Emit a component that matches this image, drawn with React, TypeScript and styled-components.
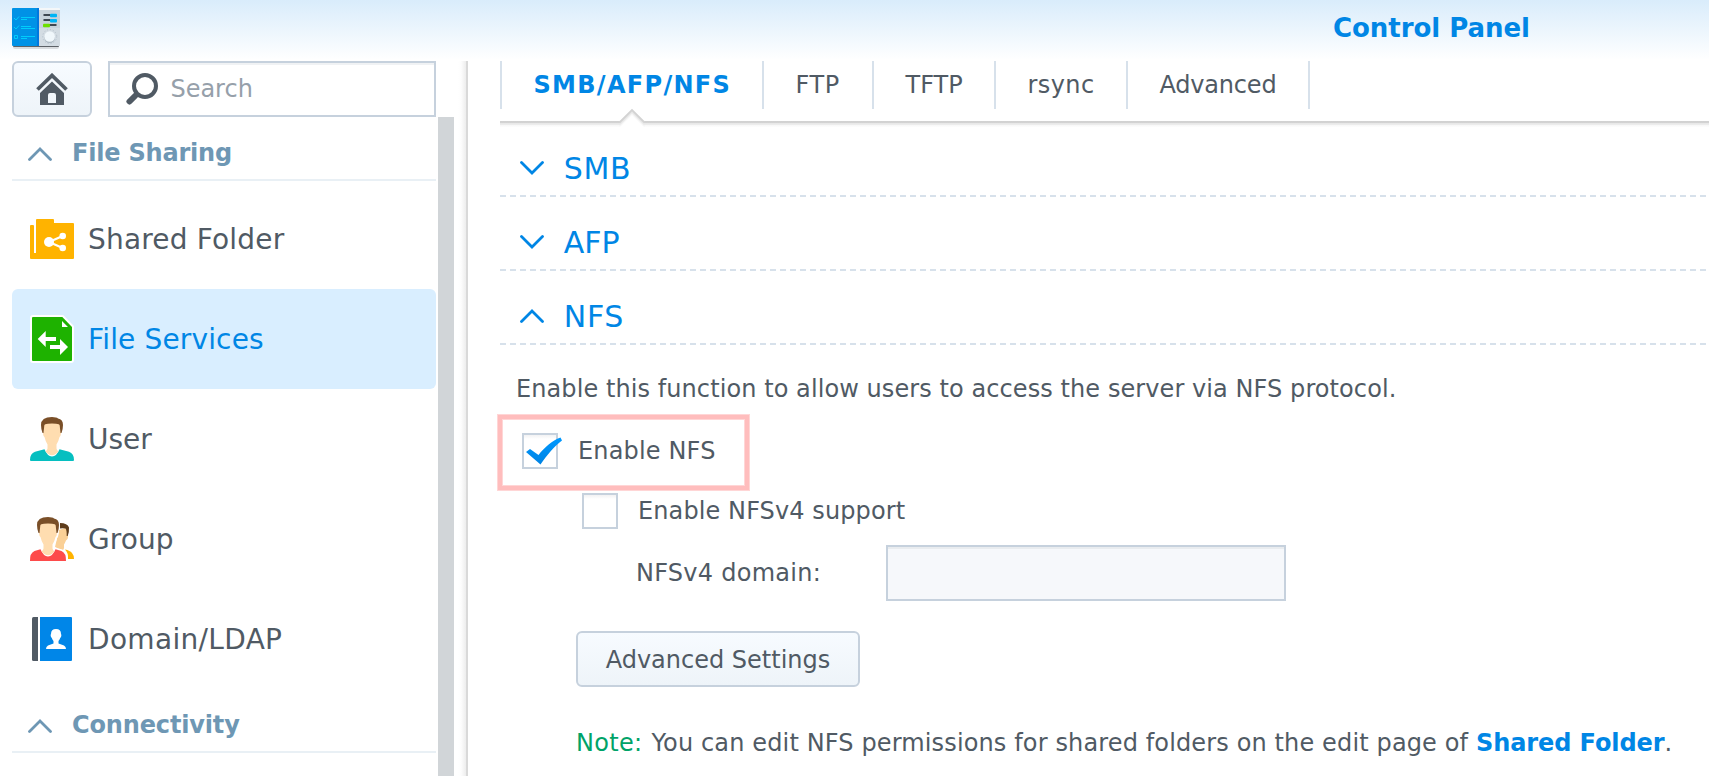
import React from "react";
import styled, { createGlobalStyle } from "styled-components";

const GlobalStyle = createGlobalStyle`
  * { box-sizing: border-box; }
  body {
    margin: 0;
    background: #fff;
    color: #505a64;
    font-family: "DejaVu Sans", Verdana, sans-serif;
    font-size: 24px;
    overflow: hidden;
  }
`;

const Window = styled.div`
  display: flex;
  flex-direction: column;
  width: 1709px;
  height: 776px;
  overflow: hidden;
  background: #fff;
`;

const TitleBar = styled.header`
  display: flex;
  align-items: flex-start;
  flex: none;
  height: 61px;
  padding: 8px 12px 0;
  background: linear-gradient(#d9ecfb 0, #fff 60px);
`;

const Title = styled.h1`
  margin: 0 0 0 1273px;
  font-size: 26px;
  font-weight: bold;
  line-height: 40px;
  letter-spacing: -0.04px;
  color: #0086e5;
  white-space: nowrap;
`;

const Body = styled.div`
  display: flex;
  flex: 1;
  min-height: 0;
`;

const Sidebar = styled.aside`
  display: flex;
  flex-direction: column;
  width: 454px;
  flex: none;
  padding-left: 12px;
`;

const SearchRow = styled.div`
  display: flex;
  gap: 16px;
  flex: none;
`;

const Button = styled.button<{ $width: number }>`
  display: flex;
  align-items: center;
  justify-content: center;
  width: ${(p) => p.$width}px;
  height: 56px;
  padding: 2px 0 0;
  border: 2px solid #c6d1dd;
  border-radius: 6px;
  background: linear-gradient(#f7fbff, #eef4f9);
  color: inherit;
  font: inherit;
  white-space: nowrap;

  svg { margin-top: -2px; }
`;

const SearchField = styled.div`
  display: flex;
  align-items: center;
  gap: 12.4px;
  width: 328px;
  height: 56px;
  padding: 0 0 0 16px;
  border: 2px solid #c6d1dd;
  box-shadow: inset 0 2px 0 #f0f2f4;
  color: #96a0aa;
`;

const SidebarScroll = styled.div`
  display: flex;
  flex: 1;
  gap: 2px;
  min-height: 0;
`;

const NavList = styled.nav`
  width: 424px;
`;

const Scrollbar = styled.div`
  width: 16px;
  background: #d1d5d8;
`;

const GroupHeader = styled.div<{ $spacing: number }>`
  display: flex;
  align-items: center;
  gap: 20px;
  height: 64px;
  padding: 10px 0 0 16px;
  border-bottom: 2px solid #e9f0f5;
  color: #6e97b4;
  font-weight: bold;
  letter-spacing: ${(p) => p.$spacing}px;

  svg { margin-top: 2px; }
`;

const NavItems = styled.div`
  padding-top: 8px;
`;

const NavItem = styled.div<{ $active?: boolean; $spacing: number }>`
  display: flex;
  align-items: center;
  gap: 12px;
  height: 100px;
  padding-left: 16px;
  border-radius: 6px;
  background: ${(p) => (p.$active ? "#d9eeff" : "transparent")};
  color: ${(p) => (p.$active ? "#0086e5" : "inherit")};
  font-size: 28px;
  letter-spacing: ${(p) => p.$spacing}px;
`;

const Divider = styled.div`
  flex: none;
  width: 10px;
  margin-left: 4px;
  border-right: 2px solid #d9d9d9;
  background: linear-gradient(to right, #fff 0, #fdfdfd 3px, #ededed 8px);
`;

const Main = styled.main`
  flex: 1;
  min-width: 0;
  padding-left: 32px;
`;

const Tabs = styled.div`
  display: flex;
  height: 60px;
`;

const Tab = styled.div<{ $width: number; $active?: boolean; $spacing: number }>`
  flex: none;
  width: ${(p) => p.$width}px;
  height: 48px;
  padding-left: 31.5px;
  border-left: 2px solid #d7e1eb;
  line-height: 48px;
  letter-spacing: ${(p) => p.$spacing}px;
  font-weight: ${(p) => (p.$active ? "bold" : "normal")};
  color: ${(p) => (p.$active ? "#0086e5" : "inherit")};
  white-space: nowrap;

  &:last-child { border-right: 2px solid #d7e1eb; }
`;

const TabEdge = styled.div`
  position: relative;
  height: 6px;
  margin-bottom: -4px;
  background: linear-gradient(#d1d1d1 0, #d3d3d3 2px, #e6e6e6 2px, #eeeeee 4px, #f7f7f7 4px, #fdfdfd 6px);
`;

const Notch = styled.svg`
  position: absolute;
  left: 117px;
  top: -13px;
`;

const SectionHeader = styled.div`
  display: flex;
  align-items: center;
  gap: 19.8px;
  height: 74px;
  padding: 18px 0 2px 20px;
  background: repeating-linear-gradient(to right, #d7e1eb 0 6px, transparent 6px 10px) left bottom / 100% 2px no-repeat;
  color: #0086e5;
  font-size: 30px;
`;

const SectionName = styled.span<{ $spacing: number }>`
  letter-spacing: ${(p) => p.$spacing}px;
`;

const Description = styled.p`
  margin: 26px 0 0 16px;
  line-height: 36px;
  letter-spacing: 0.08px;
  white-space: nowrap;
`;

const Highlight = styled.div`
  width: 251px;
  height: 75px;
  margin: 8px 0 0 -2px;
  padding: 14px 0 0 20px;
  border: 4px solid #ffbdbd;
  box-shadow: 0 0 0 1px #ffd6d6, inset 0 0 0 1px #ffd6d6;
`;

const CheckRow = styled.label<{ $spacing: number }>`
  display: flex;
  gap: 20px;
  height: 36px;
  line-height: 36px;
  letter-spacing: ${(p) => p.$spacing}px;
  white-space: nowrap;
`;

const Nested = styled.div`
  margin: 3px 0 0 82px;
`;

const CheckBox = styled.span`
  flex: none;
  width: 36px;
  height: 36px;
  border: 2px solid #c6d1dd;
  background: linear-gradient(#f2f2f3 0, #fff 4px);

  svg { display: block; overflow: visible; }
`;

const FieldRow = styled.div`
  display: flex;
  align-items: center;
  margin: 16px 0 0 136px;
`;

const FieldLabel = styled.label`
  width: 250px;
  letter-spacing: 0.26px;
`;

const TextField = styled.div`
  width: 400px;
  height: 56px;
  border: 2px solid #c6d1dd;
  background: #f6f8fb;
  box-shadow: inset 0 2px 0 #e9ecef;
`;

const Actions = styled.div`
  margin: 30px 0 0 76px;
`;

const Note = styled.p`
  display: flex;
  margin: 38px 0 0 76px;
  line-height: 36px;
  letter-spacing: 0.135px;
  white-space: pre;
`;

const NoteTag = styled.span`
  width: 75.5px;
  letter-spacing: 0.3px;
  color: #00a368;
`;

const Link = styled.a`
  color: #0086e5;
  font-weight: bold;
  letter-spacing: -0.08px;
`;

const Chevron = ({ up }: { up?: boolean }) => (
  <svg width="24" height="14" viewBox="0 0 24 14" fill="none" stroke="currentColor" strokeWidth="2.8" strokeLinecap="round">
    <path d={up ? "M1.500 12.500 12 2l10.500 10.500" : "M1.500 1.500 12 12 22.500 1.500"} />
  </svg>
);

const PanelIcon = () => (
  <svg width="48" height="42" viewBox="0 0 48 42">
    <rect x="1" y="37" width="46" height="4" rx="2" fill="#000" opacity=".12" />
    <rect x="1" y="36" width="46" height="3" rx="1" fill="#5d6267" />
    <rect x="26" y="0" width="22" height="6" rx="1" fill="#f4f7f9" />
    <path d="M27 2h21v35a1 1 0 0 1-1 1H27z" fill="#c8d3dc" />
    <path d="M27 20h21v17a1 1 0 0 1-1 1H27z" fill="#d3dce3" />
    <path d="M1 0h26v38H1a1 1 0 0 1-1-1V1a1 1 0 0 1 1-1z" fill="#0092e6" />
    <path d="M25 0h2v38h-2z" fill="#0078de" />
    <g fill="none" stroke="#00cdfb" strokeWidth="1">
      <path d="m2 10 2 2 3-3.500M2 19l2 2 3-3.500M2.500 27.500h3v3h-3zM9 9.500h14M9 11.500h6M9 18.500h10M9 20.500h14M9 28.500h14M9 30.500h6" />
    </g>
    <path d="M31.500 6h7v2h-7zM31.500 11h7v2h-7zM37 16h7.500v2H37z" fill="#3d4751" />
    <rect x="38" y="5.700" width="7" height="3.600" rx="1" fill="#00b4f5" />
    <rect x="38" y="10.900" width="7" height="3.600" rx="1" fill="#00b4f5" />
    <rect x="31" y="15.700" width="7" height="3.600" rx="1" fill="#6be000" />
    <circle cx="37.700" cy="28.500" r="7" fill="none" stroke="#b4c0ca" strokeWidth="1" strokeDasharray="1 2" />
    <circle cx="37.700" cy="29.700" r="5.300" fill="#8797a3" opacity=".5" />
    <circle cx="37.700" cy="28.500" r="5.300" fill="#f0f7fb" />
  </svg>
);

const HomeIcon = () => (
  <svg width="32" height="32" viewBox="0 0 32 32">
    <path d="M1.500 16.500 16 2.500l14.500 14" fill="none" stroke="#505a64" strokeWidth="3.800" />
    <path fillRule="evenodd" d="M16 8.500 28 20v12H4V20zM12 30h8v-8q0-2-2-2h-4q-2 0-2 2z" fill="#505a64" />
  </svg>
);

const SearchIcon = () => (
  <svg width="32" height="32" viewBox="0 0 32 32" fill="none" stroke="#505a64">
    <circle cx="19" cy="13" r="11" strokeWidth="4" />
    <path d="m10.500 21.500-1.700 1.700" strokeWidth="4" />
    <path d="m9 23-5.500 5.500" strokeWidth="6" strokeLinecap="round" strokeLinejoin="round" />
  </svg>
);

const CheckMark = () => (
  <svg width="32" height="32" viewBox="0 0 32 32">
    <defs>
      <linearGradient id="tick" x1="0" y1="0" x2="0" y2="1">
        <stop offset="0" stopColor="#0099ff" />
        <stop offset="1" stopColor="#0083e3" />
      </linearGradient>
    </defs>
    <path d="M2 17 6 14l8.500 6C20 13 28 5.500 36.500 2.500l1.500 3C30.500 11 23 20 16.500 29.500z" fill="url(#tick)" />
  </svg>
);

const SharedFolderIcon = () => (
  <>
    <path d="M3 10h2q1 0 1 1v27h2V5q0-1 1-1h16q1 0 1 1v3h19q1 0 1 1v34q0 1-1 1H3q-1 0-1-1V11q0-1 1-1z" fill="#ffb300" />
    <g fill="#fff" stroke="#fff">
      <path d="M34.700 21 21 27l13.700 6" fill="none" strokeWidth="2.200" />
      <circle cx="21" cy="27" r="5" stroke="none" />
      <circle cx="34.700" cy="21" r="3.300" stroke="none" />
      <circle cx="34.700" cy="33" r="3.300" stroke="none" />
    </g>
  </>
);

const FileServicesIcon = () => (
  <>
    <path d="M5 2h29.300L44 12v33q0 1-1 1H5q-1 0-1-1V3q0-1 1-1z" fill="#1eb200" stroke="#fff" strokeWidth="4" strokeLinejoin="round" paintOrder="stroke" />
    <path d="M34 6v6h6zM9.700 24l8-8v6H28v4H17.700v6zM40 32l-8 8v-6H22v-4h10v-6z" fill="#fff" />
  </>
);

const Person = ({ shirt, narrow }: { shirt: string; narrow?: boolean }) => (
  <>
    <path
      d={
        narrow
          ? "M6 46q-.3-8 4.500-10l6-1.800q3 7.300 7.500 7.300t7.500-7.300l6 1.800q4.800 2 4.500 10z"
          : "M3 46q-1 0-1-1 0-6.500 5-8.200l9.500-2.600q3 7.300 7.500 7.300t7.500-7.300l9.500 2.600q5 1.700 5 8.200 0 1-1 1z"
      }
      fill={shirt}
    />
    <path d="M15.500 9q8.500-3 17 0V16q.7.300.5 2.500-.2 2.500-1.500 3.500-1 4.500-3 7.500v4q.5 2 2 3-3 3.700-6.500 3.700T17.500 36.500q1.500-1 2-3v-4q-2-3-3-7.500-1.300-1-1.500-3.500-.2-2.200.5-2.500z" fill="#ffddb0" />
    <path d="M14.500 18Q13 14 13 10q0-8 11-8 4.500 0 6 1.500 5 .7 5 6.500 0 4-1.500 8h-1l-.8-7.500q-.2-1.500-3.700-1.700-4-.4-8 0-3.500.2-3.700 1.700L15.500 18z" fill="#7a4f28" />
  </>
);

const GroupIcon = () => (
  <>
    <path d="M37 34.500q5 1 7 3.500 2 2.300 2 6h-6q.5-6-3-9.500z" fill="#ffb300" />
    <path d="M31 15l6-2h3v9q0 3-2 3.500-1 2.500-2 4v3.500q-.2 1-1 2-4-.3-8-3z" fill="#fad096" />
    <path d="M32 8q7.500 0 9 4.500.3 4.500-1.300 8.500h-1q.2-6-1.200-7.500Q35 13.200 32 13.500z" fill="#5e3c1b" />
    <g transform="translate(-4)">
      <path d="M15.500 9q8.500-3 17 0V16q.7.300.5 2.500-.2 2.500-1.500 3.500-1 4.500-3 7.500v4l9 2.700q4.800 2 4.500 10H6q-.3-8 4.500-10l9-2.700v-4q-2-3-3-7.500z" fill="#fff" stroke="#fff" strokeWidth="3.500" />
      <Person shirt="#fd4b4b" narrow />
    </g>
  </>
);

const DomainIcon = () => (
  <>
    <path d="M10 2v44H5.500Q4 46 4 44.500v-41Q4 2 5.500 2z" fill="#505a64" />
    <path d="M12 2h31q1 0 1 1v42q0 1-1 1H12z" fill="#0086e8" />
    <path d="M28 14q5 0 5 5 .5.500.3 2-.3 1.500-1 1.800-.6 2-1.800 3.200v2.500l5.500 2q2 1 2 3.500H18q0-2.500 2-3.500l5.500-2V26q-1.200-1.200-1.800-3.200-.7-.3-1-1.800-.2-1.500.3-2 0-5 5-5z" fill="#fff" />
  </>
);

const navItems = [
  { label: "Shared Folder", icon: <SharedFolderIcon />, spacing: 0.18 },
  { label: "File Services", icon: <FileServicesIcon />, spacing: 0.15, active: true },
  { label: "User", icon: <Person shirt="#06bfc0" />, spacing: 0 },
  { label: "Group", icon: <GroupIcon />, spacing: 0.1 },
  { label: "Domain/LDAP", icon: <DomainIcon />, spacing: 0.32 },
];

const tabs = [
  { label: "SMB/AFP/NFS", width: 262, spacing: 1.3, active: true },
  { label: "FTP", width: 110, spacing: 0.6 },
  { label: "TFTP", width: 122, spacing: 0 },
  { label: "rsync", width: 132, spacing: 0.4 },
  { label: "Advanced", width: 184, spacing: -0.2 },
];

const sections = [
  { label: "SMB", spacing: 0.6 },
  { label: "AFP", spacing: 0 },
  { label: "NFS", spacing: 0.7, open: true },
];

export default function App() {
  return (
    <Window>
      <GlobalStyle />
      <TitleBar>
        <PanelIcon />
        <Title>Control Panel</Title>
      </TitleBar>
      <Body>
        <Sidebar>
          <SearchRow>
            <Button $width={80} aria-label="Home">
              <HomeIcon />
            </Button>
            <SearchField>
              <SearchIcon />
              <span>Search</span>
            </SearchField>
          </SearchRow>
          <SidebarScroll>
            <NavList>
              <GroupHeader $spacing={-0.2}>
                <Chevron up />
                File Sharing
              </GroupHeader>
              <NavItems>
                {navItems.map((item) => (
                  <NavItem key={item.label} $active={item.active} $spacing={item.spacing}>
                    <svg width="48" height="48" viewBox="0 0 48 48">
                      {item.icon}
                    </svg>
                    {item.label}
                  </NavItem>
                ))}
              </NavItems>
              <GroupHeader $spacing={-0.15}>
                <Chevron up />
                Connectivity
              </GroupHeader>
            </NavList>
            <Scrollbar />
          </SidebarScroll>
        </Sidebar>
        <Divider />
        <Main>
          <Tabs>
            {tabs.map((tab) => (
              <Tab key={tab.label} $width={tab.width} $active={tab.active} $spacing={tab.spacing}>
                {tab.label}
              </Tab>
            ))}
          </Tabs>
          <TabEdge>
            <Notch width="30" height="20" viewBox="0 0 30 20">
              <path d="M2.500 13 15 .8 27.500 13v7h-25z" fill="#fff" />
              <path d="M2 17.500h1L15 5.500l12 12h1" fill="none" stroke="#f6f6f6" strokeWidth="2" />
              <path d="M2 15.800h1L15 3.800l12 12h1" fill="none" stroke="#e8e8e8" strokeWidth="2" />
              <path d="M2 14h1L15 2l12 12h1" fill="none" stroke="#d3d3d3" strokeWidth="1.800" />
            </Notch>
          </TabEdge>
          {sections.map((section) => (
            <SectionHeader key={section.label}>
              <Chevron up={section.open} />
              <SectionName $spacing={section.spacing}>{section.label}</SectionName>
            </SectionHeader>
          ))}
          <Description>Enable this function to allow users to access the server via NFS protocol.</Description>
          <Highlight>
            <CheckRow $spacing={0.16}>
              <CheckBox>
                <CheckMark />
              </CheckBox>
              Enable NFS
            </CheckRow>
          </Highlight>
          <Nested>
            <CheckRow $spacing={0.1}>
              <CheckBox />
              Enable NFSv4 support
            </CheckRow>
          </Nested>
          <FieldRow>
            <FieldLabel>NFSv4 domain:</FieldLabel>
            <TextField />
          </FieldRow>
          <Actions>
            <Button $width={284}>Advanced Settings</Button>
          </Actions>
          <Note>
            <NoteTag>Note:</NoteTag>
            <span>You can edit NFS permissions for shared folders on the edit page of </span>
            <Link>Shared Folder</Link>
            <span>.</span>
          </Note>
        </Main>
      </Body>
    </Window>
  );
}
